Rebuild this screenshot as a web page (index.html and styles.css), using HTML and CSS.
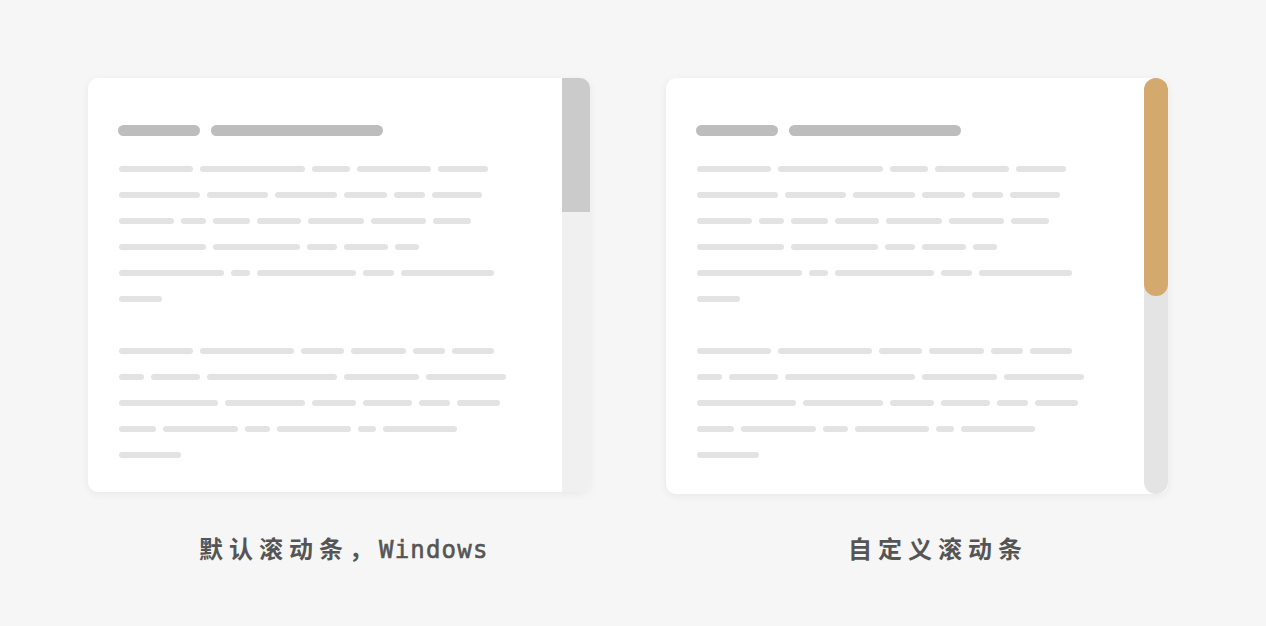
FILE: index.html
```html
<!DOCTYPE html>
<html>
  <head>
    <meta charset="utf-8" />
    <title>滚动条对比</title>
    <link rel="stylesheet" href="styles.css">
    <script src="script.js" defer></script>
  </head>
  <body>
    <div class="stage">
      <figure class="demo">
        <div class="card card--default">
          <div class="card-body doc"></div>
          <div class="scrollbar"><div class="thumb"></div></div>
        </div>
        <figcaption class="caption caption--default">默认滚动条，<span class="latin">Windows</span></figcaption>
      </figure>
      <figure class="demo">
        <div class="card card--custom">
          <div class="card-body doc"></div>
          <div class="scrollbar"><div class="thumb"></div></div>
        </div>
        <figcaption class="caption caption--custom">自定义滚动条</figcaption>
      </figure>
    </div>
  </body>
</html>
```

FILE: styles.css
```css
html,
body {
  margin: 0;
  padding: 0;
  background-color: #f6f6f6;
}
body {
  font-family: 'Noto Sans CJK SC', sans-serif;
}
.stage {
  display: flex;
  gap: 76px;
  padding: 78px 0 0 88px;
}
.demo {
  margin: 0;
  width: 502px;
}
.card {
  display: flex;
  height: 414px;
  background-color: #fff;
  border-radius: 10px;
  overflow: hidden;
  box-shadow: 0 2px 8px rgba(0, 0, 0, 0.06);
}
.card--custom {
  height: 416px;
}
.card-body {
  flex: 1;
  padding: 47px 0 0 30px;
}
.title {
  display: flex;
  gap: 11px;
  margin-bottom: 20px;
}
.title span {
  height: 11px;
  border-radius: 6px;
  background-color: #bdbdbd;
}
.para + .para {
  margin-top: 26px;
}
.line {
  display: flex;
  align-items: center;
  gap: 7px;
  height: 26px;
  padding-left: 1px;
}
.line span {
  height: 6px;
  border-radius: 3px;
  background-color: #e3e3e3;
}
.scrollbar {
  width: 28px;
  background-color: #f0f0f0;
}
.thumb {
  height: 134px;
  background-color: #cbcbcb;
}
.card--custom .scrollbar {
  width: 24px;
  background-color: #e4e4e4;
  border-radius: 12px;
}
.card--custom .thumb {
  height: 218px;
  background-color: #d3a96e;
  border-radius: 12px;
}
.caption {
  font-size: 24px;
  line-height: 30px;
  font-weight: bold;
  letter-spacing: 6px;
  color: #555;
  white-space: nowrap;
}
.caption--default {
  margin-top: 41px;
  padding-left: 111px;
}
.caption--custom {
  margin-top: 39px;
  padding-left: 182px;
}
.latin {
  font-family: 'DejaVu Sans Mono', monospace;
  font-weight: normal;
  letter-spacing: 1.2px;
  -webkit-text-stroke: 0.6px #555;
}
```

FILE: script.js
```js
// widths of the placeholder text bars, one array per line
const titleBars = [82, 172];
const paragraphs = [
  [
    [74, 105, 38, 74, 50],
    [81, 61, 62, 43, 31, 50],
    [55, 25, 37, 44, 56, 55, 38],
    [87, 87, 30, 44, 24],
    [105, 19, 99, 31, 93],
    [43]
  ],
  [
    [74, 94, 43, 55, 32, 42],
    [25, 49, 130, 75, 80],
    [99, 80, 44, 49, 31, 43],
    [37, 75, 25, 74, 18, 74],
    [62]
  ]
];

const bar = (w) => {
  const span = document.createElement('span');
  span.style.width = w + 'px';
  return span;
};

document.querySelectorAll('.doc').forEach((doc) => {
  const title = document.createElement('div');
  title.className = 'title';
  titleBars.forEach((w) => title.appendChild(bar(w)));
  doc.appendChild(title);

  paragraphs.forEach((lines) => {
    const para = document.createElement('div');
    para.className = 'para';
    lines.forEach((widths) => {
      const line = document.createElement('div');
      line.className = 'line';
      widths.forEach((w) => line.appendChild(bar(w)));
      para.appendChild(line);
    });
    doc.appendChild(para);
  });
});
```
